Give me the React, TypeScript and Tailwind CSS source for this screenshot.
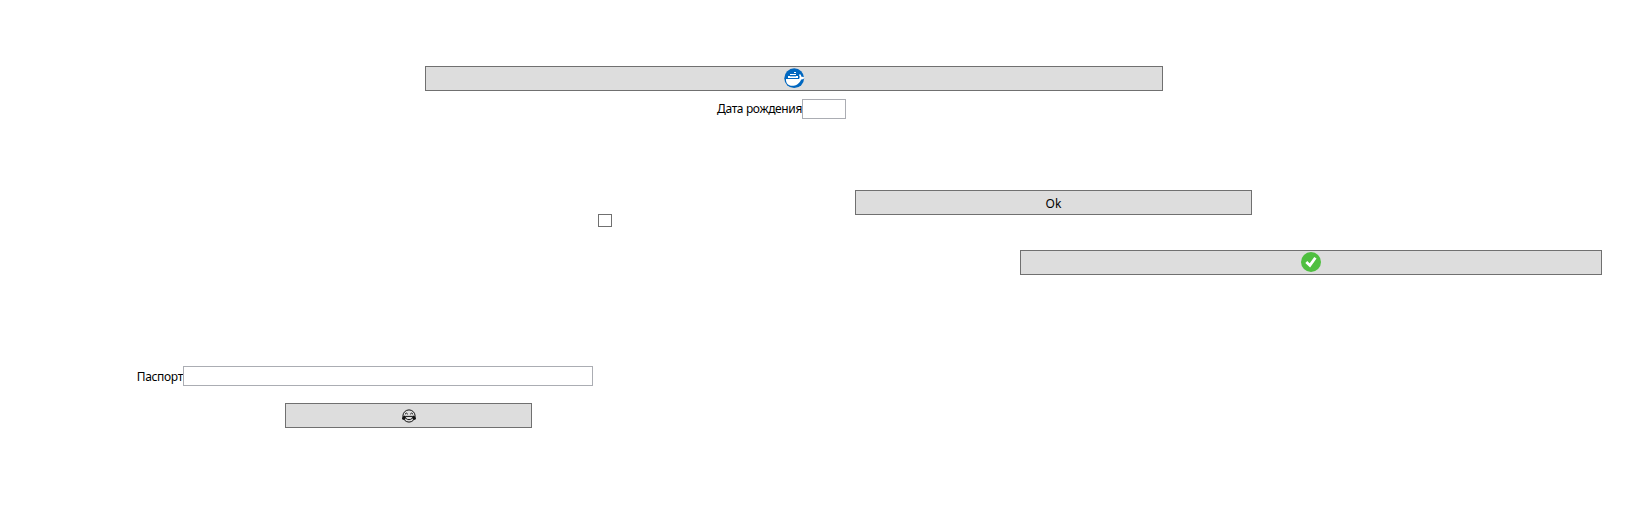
import type { ReactNode } from 'react';

function Button({ className, label, children }: { className: string; label?: string; children: ReactNode }) {
  return (
    <button
      type="button"
      aria-label={label}
      className={`flex h-[25px] shrink-0 items-center justify-center border border-[#707070] bg-[#dddddd] ${className}`}
    >
      {children}
    </button>
  );
}

function DockerIcon() {
  return (
    <svg width="21" height="21" viewBox="0 0 21 21">
      <circle cx="10.2" cy="10.2" r="9.9" fill="#0067c0" />
      <path
        fill="#fff"
        d="M2 11H15C16 10 15.8 8 15 7L16 6C16.8 6.8 17.3 7.7 17.4 8.7C18.6 8.5 19.6 8.8 20.6 9.6C20 11 18.8 11.6 17.2 11.5C15.4 15.6 12.2 17.8 8.2 17.8C4.2 17.8 1.7 15 2 11Z"
      />
      <path fill="#fff" shapeRendering="crispEdges" d="M10 4h2v1h-2zM6 6h6v1H6zM4 8h10v2H4z" />
      <path stroke="#0067c0" strokeWidth=".4" d="M6 8.5h6" />
    </svg>
  );
}

function CheckIcon() {
  return (
    <svg width="20" height="20" viewBox="0 0 20 20" className="-mt-px">
      <circle cx="10" cy="10" r="10" fill="#4fbf40" />
      <path d="M5.3 10L8.9 13.4L14.4 5.8" fill="none" stroke="#fff" strokeWidth="2.8" />
    </svg>
  );
}

function LaughIcon() {
  return (
    <svg width="14" height="14" viewBox="0 0 14 14">
      <circle cx="7" cy="7" r="6.1" fill="none" stroke="#111" strokeWidth="1" />
      <path d="M3 5.2Q4.4 3 5.8 5.2M8.2 5.2Q9.6 3 11 5.2" fill="none" stroke="#111" strokeWidth="1" />
      <path d="M3.4 7.4H10.6C10.6 9.6 9.2 10.6 7 10.6S3.4 9.6 3.4 7.4Z" fill="none" stroke="#111" strokeWidth="1" />
      <path d="M3 6.4C1.1 7.1 0 8.2 0 9.5C0 11.2 3.4 11.4 3.6 9.3ZM11 6.4C12.9 7.1 14 8.2 14 9.5C14 11.2 10.6 11.4 10.4 9.3Z" fill="#111" />
    </svg>
  );
}

export default function App() {
  return (
    <main className="flex h-[506px] w-[1628px] flex-col overflow-hidden bg-white pt-[66px] font-['Noto_Sans','Open_Sans',sans-serif] text-[12px] leading-4 text-black">
      <Button className="ml-[425px] w-[738px]" label="Docker">
        <DockerIcon />
      </Button>

      <label className="mt-2 flex h-5 items-center">
        <span className="w-[802px] text-right tracking-[-0.36px]">Дата рождения</span>
        <input className="h-5 w-11 border border-[#abadb3] bg-white px-1 outline-none" />
      </label>

      <div className="mt-[71px] flex h-[37px] items-start">
        <input
          type="checkbox"
          className="mt-6 ml-[598px] h-[13px] w-[14px] shrink-0 appearance-none border border-[#707070] bg-white"
        />
        <Button className="ml-[243px] w-[397px]">
          <span className="pt-[3px]">Ok</span>
        </Button>
      </div>

      <Button className="mt-[23px] ml-[1020px] w-[582px]" label="Confirm">
        <CheckIcon />
      </Button>

      <label className="mt-[91px] flex h-5 items-center">
        <span className="w-[183px] pt-0.5 text-right tracking-[-0.32px]">Паспорт</span>
        <input className="h-5 w-[410px] border border-[#abadb3] bg-white px-1 outline-none" />
      </label>

      <Button className="mt-[17px] ml-[285px] w-[247px]" label="Laugh">
        <LaughIcon />
      </Button>
    </main>
  );
}
